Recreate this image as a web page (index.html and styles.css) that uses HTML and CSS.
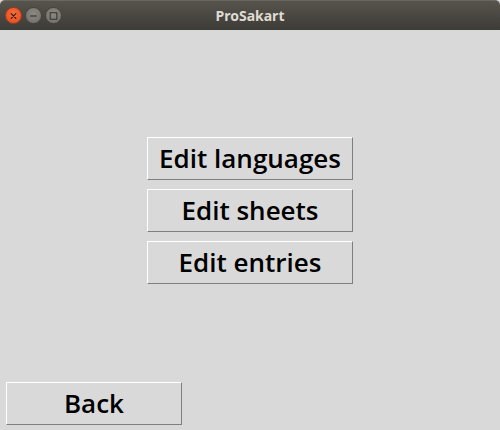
FILE: index.html
```html
<!DOCTYPE html>
<html>
<head>
<meta charset="utf-8">
<title>ProSakart</title>
<link rel="stylesheet" href="styles.css">
</head>
<body>
<div class="window">
  <header class="titlebar">
    <div class="controls">
      <span class="ctl close"><svg width="16" height="16" viewBox="0 0 16 16"><path d="M5.5 5.5 L10.5 10.5 M10.5 5.5 L5.5 10.5" stroke="#3a1a10" stroke-width="1.3" stroke-linecap="round"/></svg></span>
      <span class="ctl min"><svg width="16" height="16" viewBox="0 0 16 16"><path d="M4.5 8 H11.5" stroke="#3a3935" stroke-width="1.3"/></svg></span>
      <span class="ctl max"><svg width="16" height="16" viewBox="0 0 16 16"><rect x="4.5" y="4.5" width="7" height="7" fill="none" stroke="#3a3935" stroke-width="1.2"/></svg></span>
    </div>
    <div class="title">ProSakart</div>
  </header>
  <main class="content">
    <div class="menu">
      <button class="btn">Edit languages</button>
      <button class="btn">Edit sheets</button>
      <button class="btn">Edit entries</button>
    </div>
    <div class="footer">
      <button class="btn back">Back</button>
    </div>
  </main>
</div>
</body>
</html>
```
FILE: styles.css
```css
html, body {
  margin: 0;
  padding: 0;
  background: #d9d9d9;
}
.window {
  width: 500px;
  height: 430px;
  display: flex;
  flex-direction: column;
  overflow: hidden;
}
.titlebar {
  position: relative;
  height: 30px;
  flex: none;
  background: linear-gradient(#57544d, #3d3b37);
  border-top: 1px solid #6a675f;
  box-sizing: border-box;
  border-radius: 5px 5px 0 0;
  display: flex;
  align-items: center;
}
.controls {
  display: flex;
  gap: 3px;
  padding-left: 5px;
}
.ctl {
  width: 17px;
  height: 17px;
  border-radius: 50%;
  display: flex;
  align-items: center;
  justify-content: center;
  box-sizing: border-box;
}
.ctl.close {
  background: radial-gradient(circle at 50% 40%, #f5703f, #e2481a);
  border: 1px solid #a8391a;
}
.ctl.min, .ctl.max {
  background: radial-gradient(circle at 50% 40%, #8c8981, #6f6d67);
  border: 1px solid #45433f;
}
.title {
  position: absolute;
  left: 0;
  right: 0;
  top: 0;
  bottom: 0;
  display: flex;
  align-items: center;
  justify-content: center;
  color: #dfdbd2;
  font-family: "Noto Sans", "DejaVu Sans", sans-serif;
  font-weight: 700;
  font-size: 14px;
  pointer-events: none;
}
.content {
  flex: 1;
  display: flex;
  flex-direction: column;
  padding: 107px 0 5px 6px;
}
.menu {
  display: flex;
  flex-direction: column;
  align-items: center;
  gap: 9px;
  padding-right: 6px;
}
.btn {
  width: 206px;
  height: 43px;
  margin: 0;
  padding: 0 0 2px 0;
  background: #d9d9d9;
  border-style: solid;
  border-width: 1px;
  border-color: #ffffff #7f7f7f #7f7f7f #ffffff;
  border-radius: 0;
  color: #000;
  font-family: "Open Sans", "Noto Sans", sans-serif;
  font-weight: 600;
  font-size: 26px;
  line-height: 1;
  display: flex;
  align-items: center;
  justify-content: center;
}
.footer {
  margin-top: auto;
  display: flex;
}
.btn.back {
  width: 176px;
  height: 43px;
}
```
